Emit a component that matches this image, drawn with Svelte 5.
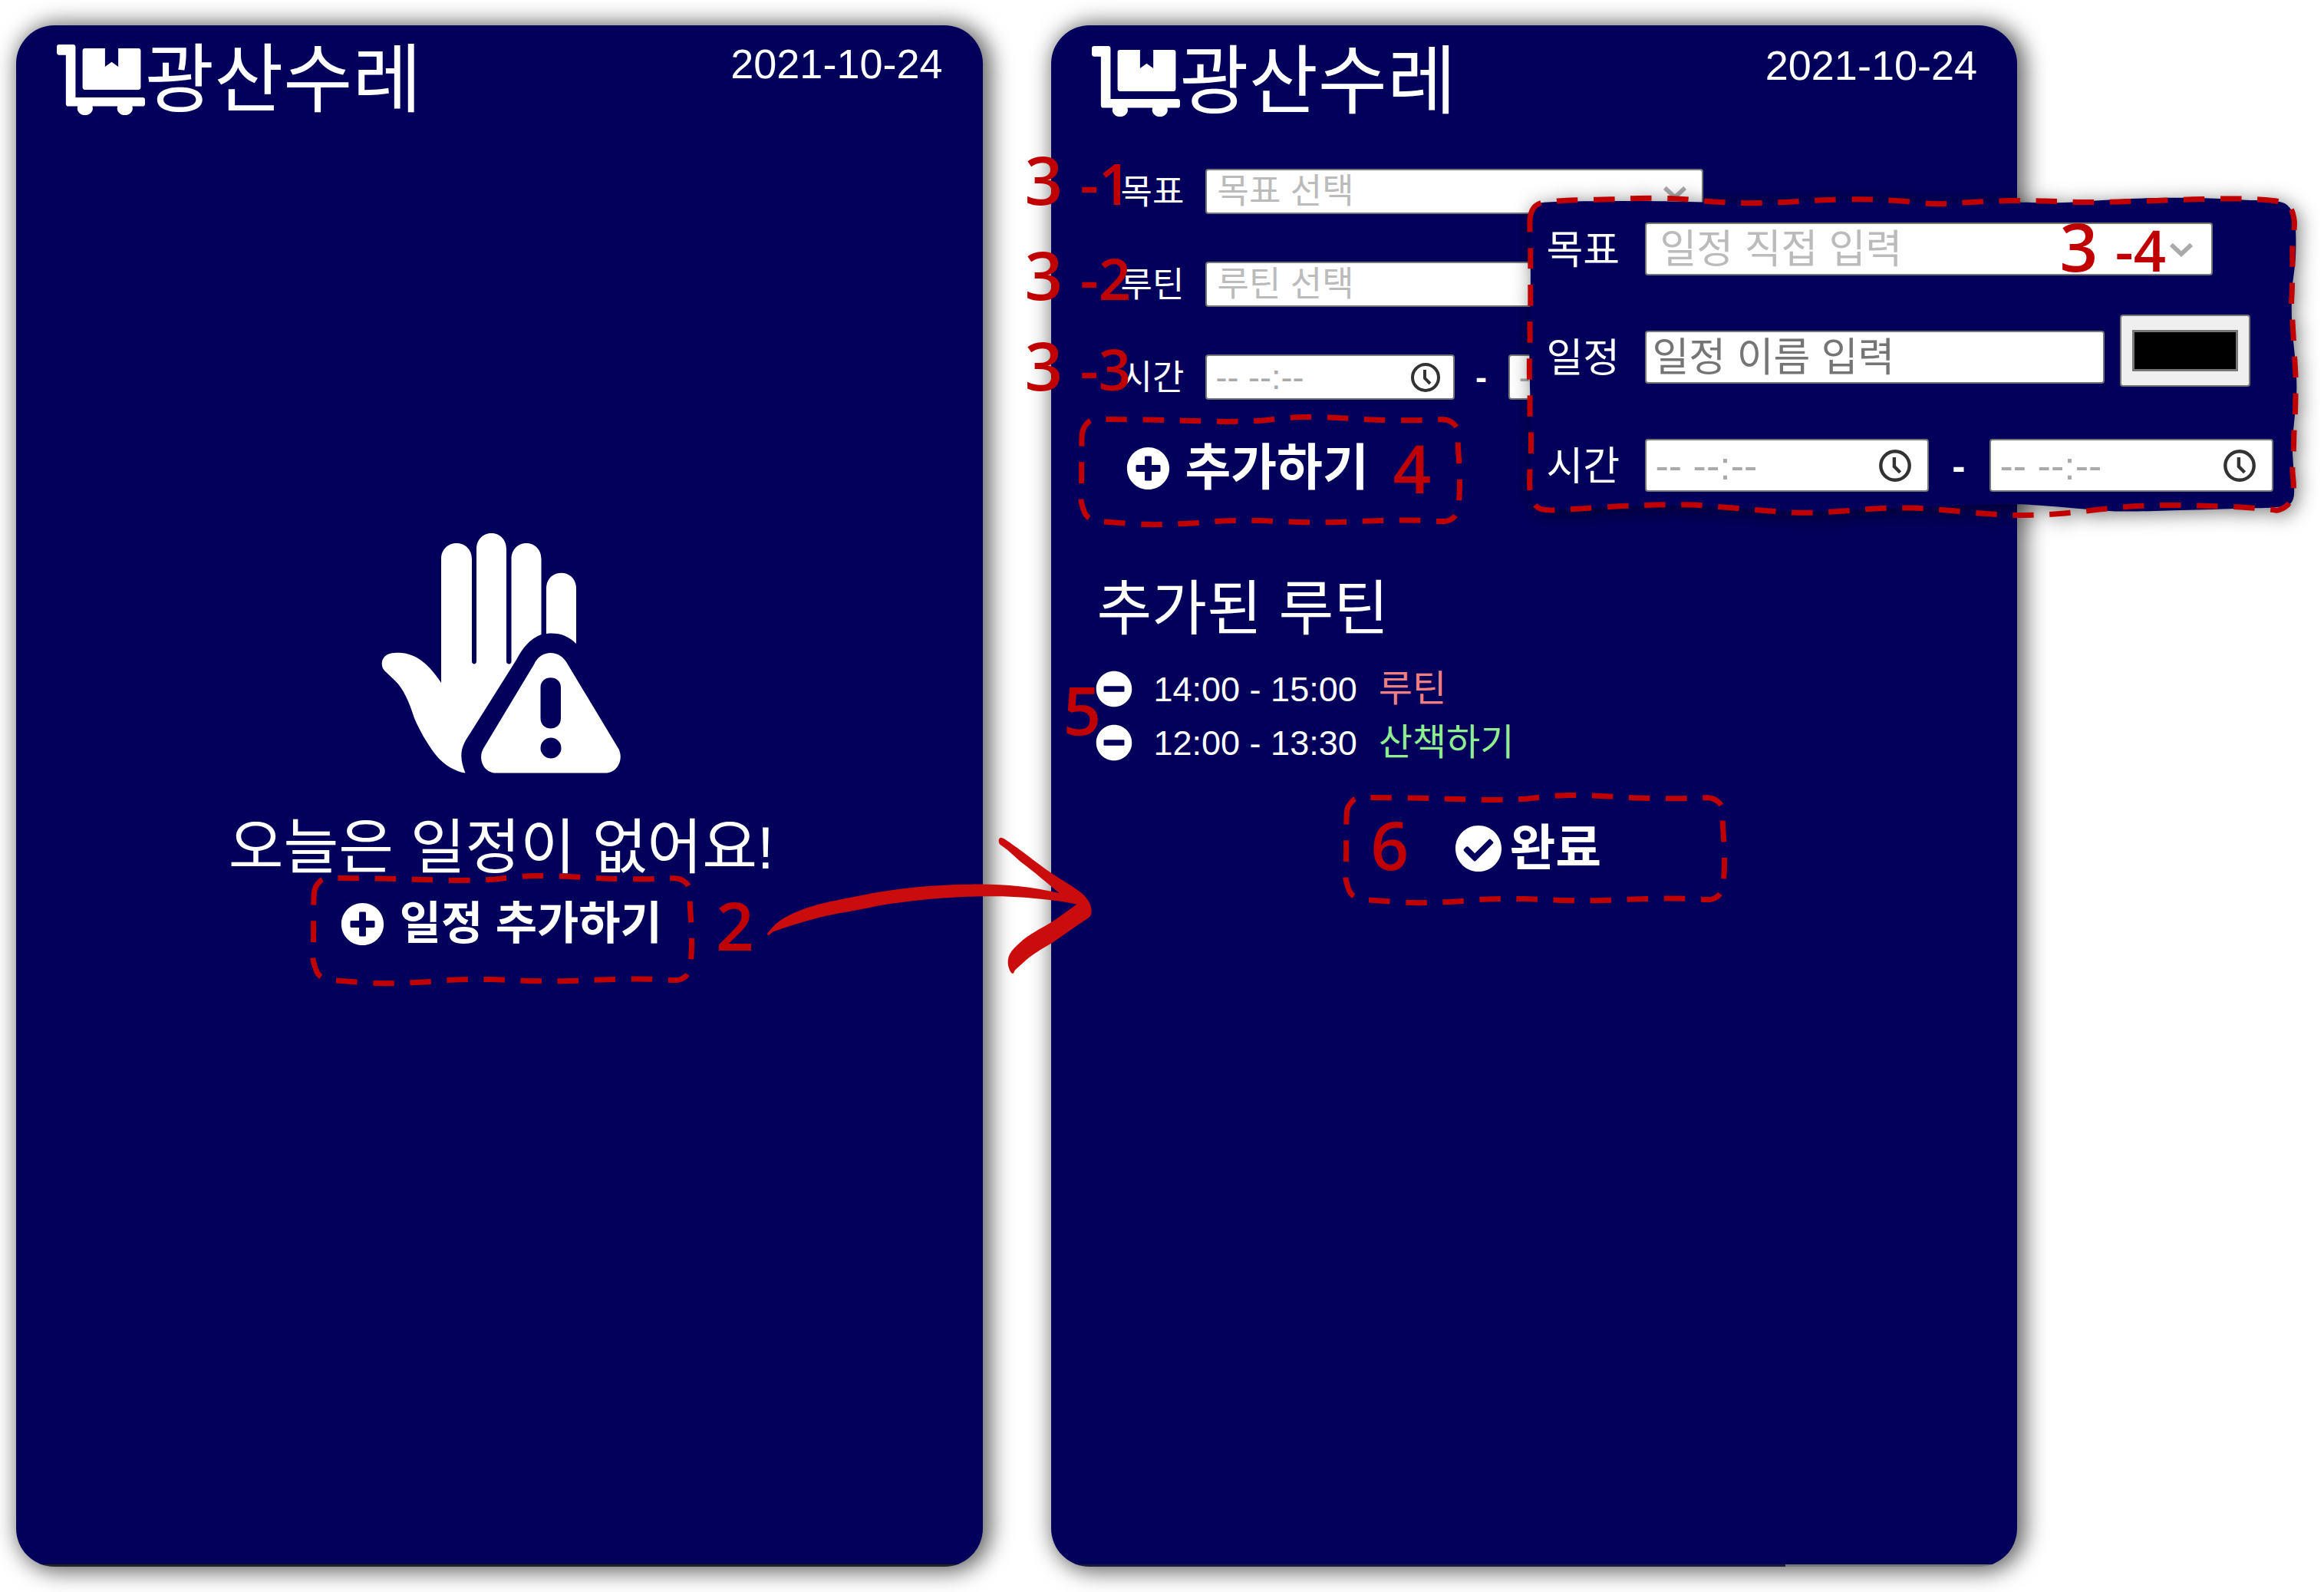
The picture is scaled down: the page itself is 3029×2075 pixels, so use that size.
<script>
  const added = [
    { time: '14:00 - 15:00', name: '루틴', tone: 'coral' },
    { time: '12:00 - 13:30', name: '산책하기', tone: 'green' }
  ];

  // Closed Catmull-Rom curve through the points, for hand-sketched outlines.
  function smooth(pts) {
    const n = pts.length;
    let d = `M${pts[0][0]} ${pts[0][1]}`;
    for (let i = 0; i < n; i++) {
      const a = pts[(i - 1 + n) % n];
      const b = pts[i];
      const c = pts[(i + 1) % n];
      const e = pts[(i + 2) % n];
      const c1 = [b[0] + (c[0] - a[0]) / 6, b[1] + (c[1] - a[1]) / 6];
      const c2 = [c[0] - (e[0] - b[0]) / 6, c[1] - (e[1] - b[1]) / 6];
      d += `C${c1.join(' ')} ${c2.join(' ')} ${c[0]} ${c[1]}`;
    }
    return d + 'Z';
  }

  const buttonSketch = smooth([
    [5, 32], [6, 22], [10, 14], [19, 7.3], [40, 6.4], [102, 7.3], [150, 8.5], [197, 9.4], [233, 8.6], [259, 6],
    [294, 3.5], [342, 4.7], [390, 7.3], [438, 7.7], [475, 6.8], [488, 11], [495, 21], [495.4, 42], [497, 68],
    [497.5, 92], [496.4, 115], [494, 128], [489, 135], [480, 139.4], [463, 139], [428, 138], [380, 139],
    [332, 140.7], [284, 140.4], [236, 138.6], [188, 139], [140, 142.4], [92, 143.6], [44, 140.7], [24, 138.6],
    [11, 132], [5, 117], [3.6, 105], [4.6, 84], [4.6, 58]
  ]);

  const panelPoints = [
    [50, 640], [57, 607], [72, 592], [100, 587], [140, 584], [205, 582], [260, 579], [330, 580], [400, 589],
    [470, 593], [540, 590], [610, 584], [685, 582], [750, 586], [825, 595], [895, 590], [965, 586], [1035, 587],
    [1105, 590], [1177, 589], [1248, 586], [1318, 582], [1388, 580], [1440, 582], [1480, 588], [1503, 605],
    [1511, 640], [1511, 670], [1508, 720], [1508, 775], [1507, 850], [1506, 885], [1508, 935], [1510, 990],
    [1512, 1045], [1514, 1100], [1514, 1150], [1513, 1210], [1511, 1260], [1510, 1315], [1508, 1370],
    [1510, 1425], [1502, 1468], [1482, 1489], [1467, 1488], [1415, 1481], [1345, 1477], [1275, 1475],
    [1205, 1478], [1135, 1488], [1063, 1500], [993, 1504], [923, 1500], [850, 1490], [780, 1483], [710, 1485],
    [640, 1493], [570, 1497], [500, 1491], [430, 1482], [360, 1474], [290, 1474], [220, 1478], [148, 1485],
    [85, 1489], [60, 1475], [50, 1430], [50, 1370], [52, 1320], [52, 1265], [50, 1210], [50, 1155], [49, 1100],
    [49, 1045], [50, 1000], [50, 940], [51, 890], [51, 830], [51, 770], [51, 720]
  ];
  const fillPoints = [
    [51, 640], [57, 607], [72, 592], [140, 588], [260, 587], [380, 590], [470, 593], [610, 587], [750, 588],
    [825, 593], [965, 590], [1060, 592], [1150, 584], [1250, 578], [1350, 579], [1420, 584], [1480, 588],
    [1503, 607], [1513, 650], [1514, 750], [1507, 850], [1507, 950], [1513, 1050], [1516, 1130], [1513, 1200],
    [1508, 1300], [1511, 1400], [1508, 1462], [1482, 1480], [1400, 1485], [1280, 1490], [1180, 1493],
    [1100, 1485], [1020, 1475], [950, 1472], [850, 1478], [710, 1485], [570, 1494], [430, 1482], [290, 1476],
    [148, 1485], [85, 1489], [60, 1475], [50, 1430], [52, 1265], [49, 1045], [51, 830]
  ];
  const toPanel = (p) => [Math.round((p[0] / 1.467 - 33) * 10) / 10, Math.round((p[1] / 2.24 - 258) * 10) / 10];
  const panelSketch = smooth(panelPoints.map(toPanel));
  const panelFill = smooth(fillPoints.map(toPanel));
</script>

{#snippet cart()}
  <svg class="cart" viewBox="0 0 640 512" aria-hidden="true">
    <path d="M203 328h390c8.800 0 16-7.200 16-16V44c0-8.800-7.200-16-16-16H446v134l-48-36-48 36V28H203c-8.800 0-16 7.200-16 16v268c0 8.800 7.200 16 16 16zm421 56H136V16c0-8.800-7.200-16-16-16H16C7.200 0 0 7.200 0 16v44c0 8.800 7.200 16 16 16h50v356c0 8.800 7.200 16 16 16h70c-1.800 5-2.900 10.400-2.900 16 0 26.500 25 48 56 48s56-21.500 56-48c0-5.600-1.200-11-2.900-16H441c-1.800 5-2.900 10.400-2.900 16 0 26.500 25 48 56 48s56-21.500 56-48c0-5.600-1.200-11-2.900-16H624c8.800 0 16-7.200 16-16v-32c0-8.800-7.200-16-16-16z" />
  </svg>
{/snippet}

{#snippet disc(mark)}
  <svg class="disc" viewBox="0 0 512 512" aria-hidden="true">
    {#if mark === 'plus'}
      <path d="M256 8C119 8 8 119 8 256s111 248 248 248 248-111 248-248S393 8 256 8zm144 276c0 6.600-5.400 12-12 12h-92v92c0 6.600-5.400 12-12 12h-56c-6.600 0-12-5.400-12-12v-92h-92c-6.600 0-12-5.400-12-12v-56c0-6.600 5.400-12 12-12h92v-92c0-6.600 5.400-12 12-12h56c6.600 0 12 5.400 12 12v92h92c6.600 0 12 5.400 12 12v56z" />
    {:else if mark === 'minus'}
      <path d="M256 8C119 8 8 119 8 256s111 248 248 248 248-111 248-248S393 8 256 8zM124 296c-6.600 0-12-5.400-12-12v-56c0-6.600 5.400-12 12-12h264c6.600 0 12 5.400 12 12v56c0 6.600-5.400 12-12 12H124z" />
    {:else}
      <path d="M504 256c0 136.967-111.033 248-248 248S8 392.967 8 256 119.033 8 256 8s248 111.033 248 248zM227.314 387.314l184-184c6.248-6.248 6.248-16.379 0-22.627l-22.627-22.627c-6.248-6.249-16.379-6.249-22.628 0L216 308.118l-70.059-70.059c-6.248-6.248-16.379-6.248-22.628 0l-22.627 22.627c-6.248 6.248-6.248 16.379 0 22.627l104 104c6.249 6.249 16.379 6.249 22.628.001z" />
    {/if}
  </svg>
{/snippet}

{#snippet chevron()}
  <svg class="chevron" viewBox="0 0 34 20" aria-hidden="true"><path d="M3 3l14 13L31 3" /></svg>
{/snippet}

{#snippet timeField(id, label)}
  <span class="time">
    <input {id} type="text" placeholder="-- --:--" aria-label={label} />
    <svg class="clock" viewBox="0 0 40 40" aria-hidden="true"><circle cx="20" cy="20" r="17" /><path d="M19 10v11l7 7" /></svg>
  </span>
{/snippet}

{#snippet outline()}
  <svg class="outline" viewBox="0 0 502 148" aria-hidden="true"><path class="dash" d={buttonSketch} /></svg>
{/snippet}

{#snippet top()}
  <header>
    <h1>{@render cart()}<span>광산수레</span></h1>
    <time datetime="2021-10-24">2021-10-24</time>
  </header>
{/snippet}

<main>
  <section class="card">
    {@render top()}
    <div class="empty">
      <svg class="hand" viewBox="0 0 312 313" aria-hidden="true">
        <path d="M78 195V34C78 6 118 6 118 34V167C118 171.500 124 171.500 124 167V21C124-7 163-7 163 21V167C163 171 168 172 169.500 168V34C169.500 6 208.500 6 208.500 34V132C193 138 184 150 176 165L115 262C103 279 101 291 109.500 312.500C98 311 82 303 71 289C58 272 49 255 43 241C36 219 29 203 17.700 192L5 180C-2 174-2 157 17 156C42 153 62 170 78 195Z" />
        <path d="M215 131V72C215 45 254 45 254 72V144C243 133 230 129 215 131Z" />
        <path fill-rule="evenodd" d="M199 171C208 151 233 151 243 171L308 279C317 292 309 312.600 292 312.600H150C132 312.600 125 292 134 279ZM207.500 201V241C207.500 259 234 259 234 241V201C234 184 207.500 184 207.500 201ZM221 266.500A13.500 13.500 0 1 0 221 293.500A13.500 13.500 0 1 0 221 266.500Z" />
      </svg>
      <h2>오늘은 일정이 없어요!</h2>
      <button class="action small" type="button">
        {@render disc('plus')}<span>일정 추가하기</span>
        <span class="around a2">{@render outline()}</span>
      </button>
    </div>
    <span class="mark m2">2</span>
  </section>

  <section class="card second">
    {@render top()}
    <form class="form">
      <div class="row">
        <label for="goal">목표</label>
        <span class="pick">
          <select id="goal"><option>목표 선택</option></select>{@render chevron()}
        </span>
      </div>
      <div class="row">
        <label for="routine">루틴</label>
        <span class="pick">
          <select id="routine"><option>루틴 선택</option></select>{@render chevron()}
        </span>
      </div>
      <div class="row">
        <label for="start">시간</label>
        {@render timeField('start', '시작 시간')}
        <span class="to">-</span>
        {@render timeField('end', '종료 시간')}
      </div>
    </form>
    <button class="action add" type="button">
      {@render disc('plus')}<span>추가하기</span>
      <span class="around a4">{@render outline()}</span>
    </button>

    <h2 class="title">추가된 루틴</h2>
    <ul>
      {#each added as item}
        <li>
          <button class="remove" type="button" aria-label="삭제">{@render disc('minus')}</button>
          <p><span>{item.time}</span><span class={item.tone}>{item.name}</span></p>
        </li>
      {/each}
    </ul>
    <button class="action done" type="button">
      {@render disc('check')}<span>완료</span>
      <span class="around a6">{@render outline()}</span>
    </button>

    <svg class="arrow" viewBox="0 0 1380 660" aria-hidden="true">
      <path d="M64 447C58 443 60 438 66 433C74 425 82 412 98 399C140 365 210 338 282 321C350 306 410 295 470 283C560 266 700 249 850 248C970 245 1080 254 1202 282C1150 240 1110 204 1050 159C1020 133 995 108 972 94C962 84 962 66 974 65C986 66 1010 86 1036 104C1080 136 1120 168 1170 203C1210 230 1250 252 1280 275C1310 297 1328 325 1328 352C1328 368 1322 376 1310 383C1260 415 1215 449 1170 479C1130 502 1100 520 1074 542L1030 582C1024 588 1026 597 1019 597C1012 596 1000 570 1001 552C1001 520 1020 500 1060 465C1100 435 1140 415 1170 397C1205 374 1240 347 1270 326C1200 311 1100 300 980 295C800 292 640 307 490 332C410 350 340 360 290 371C210 390 140 413 84 433C76 437 70 447 64 447Z" />
    </svg>

    <span class="mark m31">3 <small>-1</small></span>
    <span class="mark m32">3 <small>-2</small></span>
    <span class="mark m33">3 <small>-3</small></span>
    <span class="mark m4">4</span>
    <span class="mark m5">5</span>
    <span class="mark m6">6</span>

    <form class="panel">
      <svg class="sheet" viewBox="0 0 1001 416" aria-hidden="true">
        <path class="fill" d={panelFill} />
        <path class="dash" d={panelSketch} />
      </svg>
      <div class="row">
        <label for="goal2">목표</label>
        <span class="pick">
          <select id="goal2"><option>일정 직접 입력</option></select>{@render chevron()}
        </span>
      </div>
      <div class="row">
        <label for="plan">일정</label>
        <input id="plan" class="plan" type="text" placeholder="일정 이름 입력" />
        <input class="swatch" type="color" value="#000000" aria-label="색상" />
      </div>
      <div class="row">
        <label for="start2">시간</label>
        {@render timeField('start2', '시작 시간')}
        <span class="to">-</span>
        {@render timeField('end2', '종료 시간')}
      </div>
      <span class="mark m34">3 <small>-4</small></span>
    </form>
  </section>
</main>

<style>
  :global(body) {
    margin: 0;
    background: #fff;
  }
  main {
    display: flex;
    gap: 89px;
    box-sizing: border-box;
    min-height: 100vh;
    padding: 33px 400px 33px 21px;
    overflow: hidden;
    color: #fff;
    font-family: 'Liberation Sans', 'Noto Sans CJK KR', sans-serif;
  }
  .card {
    position: relative;
    flex: 1 1 0;
    min-width: 0;
    box-sizing: border-box;
    display: flex;
    flex-direction: column;
    padding: 19px 52px 0 53px;
    border-radius: 50px;
    background: linear-gradient(#222, #222) bottom / 100% 3px no-repeat #03005c;
    box-shadow: 6px 2px 28px 5px rgba(0, 0, 0, 0.6);
  }
  .second {
    padding-top: 21px;
    background: linear-gradient(90deg, #1c1a3a 76%, #777 76%) bottom / 100% 3px no-repeat #03005c;
  }
  h1, h2, p, ul {
    margin: 0;
    padding: 0;
    font-weight: 400;
  }
  svg {
    display: block;
    overflow: visible;
    fill: #fff;
  }
  button {
    border: 0;
    padding: 0;
    background: none;
    color: inherit;
    font-family: inherit;
    cursor: pointer;
  }
  header {
    display: flex;
    justify-content: space-between;
    align-items: flex-start;
  }
  h1 {
    display: flex;
    align-items: flex-end;
    height: 98px;
    font-size: 98px;
    line-height: 92px;
  }
  .cart {
    width: 115px;
    height: 92px;
  }
  time {
    font-size: 54px;
    line-height: 62px;
  }
  .empty {
    display: flex;
    flex-direction: column;
    align-items: center;
    padding: 545px 0 0 4px;
  }
  .hand {
    width: 312px;
    height: 313px;
  }
  h2 {
    font-size: 78px;
    line-height: 80px;
  }
  .empty h2 {
    margin: 57px 0 27px;
  }
  .action {
    position: relative;
    display: flex;
    align-items: center;
    gap: 20px;
    height: 64px;
    font-size: 65px;
    line-height: 64px;
    font-weight: 700;
  }
  .action .disc {
    width: 57px;
    height: 57px;
  }
  .small {
    font-size: 59px;
  }
  .around {
    position: absolute;
  }
  .a2 {
    left: -40px;
    top: -34px;
  }
  .a4 {
    left: -63px;
    top: -38px;
  }
  .a6 {
    left: -146px;
    top: -41px;
  }
  .outline {
    width: 502px;
    height: 148px;
  }
  .dash {
    fill: none;
    stroke: #c00000;
    stroke-width: 7;
    stroke-dasharray: 27.5 20.6;
  }
  .form {
    display: flex;
    flex-direction: column;
    gap: 62px;
    padding: 68px 0 57px 38px;
    font-size: 45px;
  }
  .row {
    display: flex;
    align-items: center;
    height: 59px;
  }
  label {
    flex: none;
    width: 110px;
    padding-bottom: 6px;
    font-size: 45px;
  }
  select,
  input {
    box-sizing: border-box;
    width: 100%;
    height: 100%;
    margin: 0;
    border: 2px solid #767676;
    border-radius: 4px;
    background: #fff;
    font-family: inherit;
    font-size: inherit;
  }
  select {
    appearance: none;
    padding: 0 60px 0 14px;
    color: #bbb;
  }
  .pick,
  .time {
    position: relative;
    flex: none;
    width: 649px;
    height: 100%;
  }
  .time {
    width: 325px;
  }
  .time input {
    padding: 0 60px 0 12px;
  }
  .time input::placeholder {
    color: #aaa;
  }
  .chevron {
    position: absolute;
    right: 21px;
    top: 38%;
    width: 32px;
    height: 19px;
    fill: none;
    stroke: #aaa;
    stroke-width: 6;
  }
  .clock {
    position: absolute;
    right: 18px;
    top: 0;
    bottom: 0;
    margin: auto;
    width: 40px;
    height: 40px;
    fill: none;
    stroke: #333;
    stroke-width: 4;
  }
  .to {
    flex: none;
    width: 70px;
    text-align: center;
    font-weight: 700;
  }
  .add {
    align-self: flex-start;
    margin-left: 45px;
  }
  .title {
    margin-top: 112px;
    padding-left: 7px;
  }
  ul {
    margin: 29px 0 71px 5px;
    list-style: none;
  }
  li {
    display: flex;
    align-items: center;
    gap: 28px;
    height: 70px;
  }
  .remove .disc {
    width: 48px;
    height: 48px;
  }
  li p {
    display: flex;
    align-items: baseline;
    gap: 28px;
    font-size: 45px;
    line-height: 64px;
  }
  .coral,
  .green {
    font-size: 48px;
  }
  .coral {
    color: #f08080;
  }
  .green {
    color: #90ee90;
  }
  .done {
    align-self: center;
    gap: 9px;
    margin-right: 16px;
  }
  .done .disc {
    width: 62px;
    height: 62px;
  }
  .arrow {
    position: absolute;
    left: -390px;
    top: 1037px;
    width: 460px;
    height: 220px;
    fill: #cb0c0c;
  }
  .mark {
    position: absolute;
    color: #c00000;
    font: 600 87px/88px 'Open Sans', 'Noto Sans', sans-serif;
    white-space: nowrap;
    pointer-events: none;
  }
  .mark small {
    font-size: 74px;
  }
  .m2 {
    left: 912px;
    top: 1128px;
  }
  .m31,
  .m32,
  .m33 {
    left: -34px;
    top: 156px;
  }
  .m32 {
    top: 280px;
  }
  .m33 {
    top: 398px;
  }
  .m4 {
    left: 446px;
    top: 532px;
  }
  .m5 {
    left: 16px;
    top: 847px;
  }
  .m6 {
    left: 417px;
    top: 1023px;
  }
  .m34 {
    left: 692px;
    top: 18px;
  }
  .panel {
    position: absolute;
    left: 623px;
    top: 225px;
    box-sizing: border-box;
    display: flex;
    flex-direction: column;
    gap: 72px;
    width: 1001px;
    height: 416px;
    padding: 32px 30px 0 23px;
    font-size: 52px;
  }
  .sheet {
    position: absolute;
    left: 0;
    top: 0;
    width: 1001px;
    height: 416px;
    filter: drop-shadow(4px 4px 12px rgba(0, 0, 0, 0.5));
  }
  .sheet .fill {
    fill: #03005c;
  }
  .panel .row {
    position: relative;
    height: 69px;
  }
  .panel label {
    width: 128px;
    font-size: 52px;
  }
  .panel .pick {
    width: 740px;
  }
  .panel select {
    padding-left: 18px;
  }
  .panel .chevron {
    right: 25px;
  }
  .panel .time {
    width: 370px;
  }
  .panel .clock {
    right: 22px;
    width: 44px;
    height: 44px;
  }
  .panel .to {
    width: 79px;
  }
  .plan {
    flex: none;
    width: 599px;
    padding: 0 8px;
  }
  .plan::placeholder {
    color: #757575;
  }
  .swatch {
    flex: none;
    width: 170px;
    height: 94px;
    margin: 0 0 18px 20px;
    padding: 12px 8px;
    background: #efefef;
  }
  .swatch::-webkit-color-swatch-wrapper {
    padding: 6px;
  }
  .swatch::-webkit-color-swatch {
    border: 3px solid #777;
  }
</style>
